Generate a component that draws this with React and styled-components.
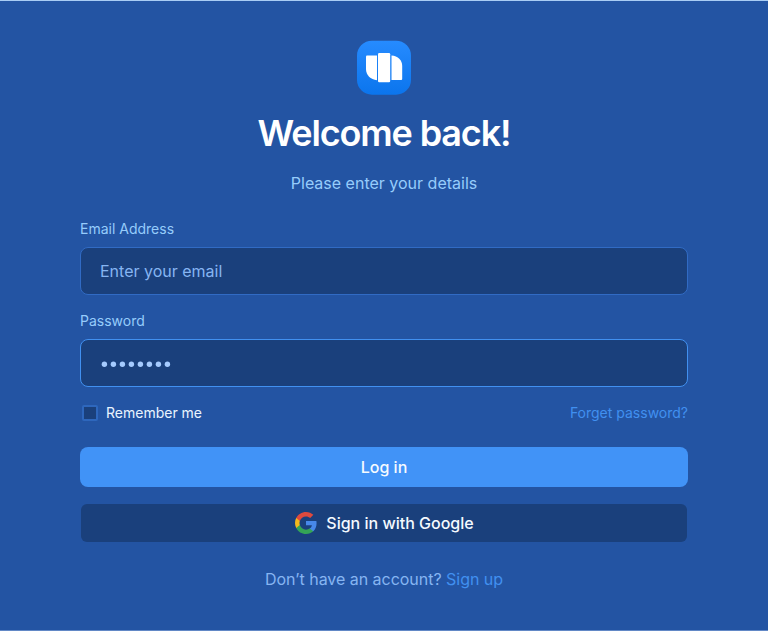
import React from "react";
import styled, { createGlobalStyle } from "styled-components";

const GlobalStyle = createGlobalStyle`
  *, *::before, *::after { box-sizing: border-box; }
  html, body { margin: 0; padding: 0; background: #2354a3; }
  body, input, button { font-family: Inter, "Liberation Sans", sans-serif; }
`;

const Page = styled.main`
  height: 631px;
  padding: 39px 80px 0;
  background: #2354a3;
  border-top: 1px solid #a9cdf5;
  border-bottom: 1px solid #6288c6;
  display: flex;
  flex-direction: column;
  align-items: center;
`;

const Logo = styled.svg`
  display: block;
  width: 56px;
  height: 56px;
  flex: none;
`;

const Title = styled.h1`
  margin: 15px 0 0;
  font-size: 36px;
  line-height: 44px;
  font-weight: 600;
  letter-spacing: -1.15px;
  color: #fff;
  white-space: nowrap;
`;

const Subtitle = styled.p`
  margin: 16px 0 0;
  font-size: 16px;
  line-height: 24px;
  color: #96ccfb;
`;

const Form = styled.form`
  width: 100%;
  margin-top: 24px;
  display: flex;
  flex-direction: column;
`;

const Field = styled.div`
  display: flex;
  flex-direction: column;
  gap: 8px;
  margin-bottom: 16px;
`;

const Label = styled.label`
  font-size: 14px;
  line-height: 20px;
  color: #96ccfb;
`;

const Input = styled.input`
  width: 100%;
  height: 48px;
  padding: 0 19px;
  border: 1px solid #316bc4;
  border-radius: 8px;
  outline: none;
  background: #1a407c;
  color: #93c5fd;
  font-size: 16px;
  &::placeholder { color: #86b5f2; opacity: 1; }
`;

const PasswordBox = styled.div`
  height: 48px;
  padding: 0 19px;
  border: 1px solid #4190f0;
  border-radius: 8px;
  background: #1a407c;
  display: flex;
  align-items: center;
`;

const MaskDots = styled.svg`
  display: block;
  width: 74px;
  height: 12px;
  fill: #a5cbff;
`;

const Options = styled.div`
  height: 20px;
  display: flex;
  align-items: center;
  justify-content: space-between;
  font-size: 14px;
  line-height: 20px;
`;

const Remember = styled.label`
  display: flex;
  align-items: center;
  gap: 8px;
  padding-left: 2px;
  color: #eaf4ff;
`;

const Checkbox = styled.input`
  appearance: none;
  width: 16px;
  height: 16px;
  margin: 0;
  border: 2px solid #2e67bd;
  border-radius: 2px;
  background: #1a407c;
`;

const Link = styled.a`
  color: #4190f0;
  text-decoration: none;
`;

const Button = styled.button`
  height: 40px;
  margin: 24px 0 0;
  padding: 0;
  border: 0;
  border-radius: 8px;
  background: #4193f7;
  color: #f5faff;
  font-size: 16px;
  line-height: 24px;
  font-weight: 500;
`;

const GoogleButton = styled(Button)`
  height: 38px;
  margin: 17px 1px 0;
  border-radius: 6px;
  background: #1a407c;
  display: flex;
  align-items: center;
  justify-content: center;
  gap: 8px;
`;

const GoogleIcon = styled.svg`
  width: 24px;
  height: 24px;
  flex: none;
`;

const Footer = styled.p`
  margin: 25px 0 0;
  font-size: 16px;
  line-height: 24px;
  letter-spacing: -0.03px;
  color: #86b5f2;
`;

const dots = Array.from({ length: 8 }, (_, i) => i);

export default function App() {
  return (
    <>
      <GlobalStyle />
      <Page>
        <Logo viewBox="0 0 56 56" aria-hidden="true">
          <defs>
            <linearGradient id="tile" x1="0" y1="0" x2="0" y2="1">
              <stop offset="0" stopColor="#268bff" />
              <stop offset="1" stopColor="#0b75ed" />
            </linearGradient>
          </defs>
          <rect x="1" y="0.7" width="54" height="54" rx="15" fill="url(#tile)" />
          <path d="M11 15.500h10v24.700C14.500 39.700 10 35 10 29V16.500a1 1 0 0 1 1-1Z" fill="#fff" />
          <rect x="22" y="13" width="12.200" height="29.300" rx="1.200" fill="#fff" />
          <path d="M35.500 15.500C42 16 46.200 20 46.200 26V39a1 1 0 0 1-1 1H35.500Z" fill="#fff" />
        </Logo>
        <Title>Welcome back!</Title>
        <Subtitle>Please enter your details</Subtitle>
        <Form onSubmit={(e) => e.preventDefault()}>
          <Field>
            <Label htmlFor="email">Email Address</Label>
            <Input id="email" type="email" placeholder="Enter your email" />
          </Field>
          <Field>
            <Label>Password</Label>
            <PasswordBox aria-label="Password">
              <MaskDots viewBox="0 0 74 12" aria-hidden="true">
                {dots.map((i) => <circle key={i} cx={4.4 + i * 9} cy="7.2" r="2.7" />)}
              </MaskDots>
            </PasswordBox>
          </Field>
          <Options>
            <Remember>
              <Checkbox type="checkbox" />
              <span>Remember me</span>
            </Remember>
            <Link>Forget password?</Link>
          </Options>
          <Button type="submit">Log in</Button>
          <GoogleButton type="button">
            <GoogleIcon viewBox="0 0 24 24" aria-hidden="true">
              <path fill="#4788ea" d="M22.560 12.250c0-.780-.070-1.530-.200-2.250H12v4.260h5.920c-.260 1.370-1.040 2.530-2.210 3.310v2.770h3.570c2.080-1.920 3.280-4.740 3.280-8.090z" />
              <path fill="#34a456" d="M12 23c2.970 0 5.460-.980 7.280-2.660l-3.570-2.770c-.980.660-2.230 1.060-3.710 1.060-2.860 0-5.290-1.930-6.160-4.530H2.180v2.840C3.990 20.530 7.700 23 12 23z" />
              <path fill="#f4b91c" d="M5.840 14.090c-.220-.660-.350-1.360-.350-2.090s.130-1.430.350-2.090V7.070H2.180C1.430 8.550 1 10.220 1 12s.430 3.450 1.180 4.930l3.660-2.840z" />
              <path fill="#de4a3e" d="M12 5.380c1.620 0 3.060.560 4.210 1.640l3.150-3.150C17.450 2.090 14.970 1 12 1 7.700 1 3.990 3.470 2.180 7.070l3.660 2.840c.870-2.600 3.300-4.530 6.160-4.530z" />
            </GoogleIcon>
            <span>Sign in with Google</span>
          </GoogleButton>
        </Form>
        <Footer>
          Don’t have an account? <Link>Sign up</Link>
        </Footer>
      </Page>
    </>
  );
}
